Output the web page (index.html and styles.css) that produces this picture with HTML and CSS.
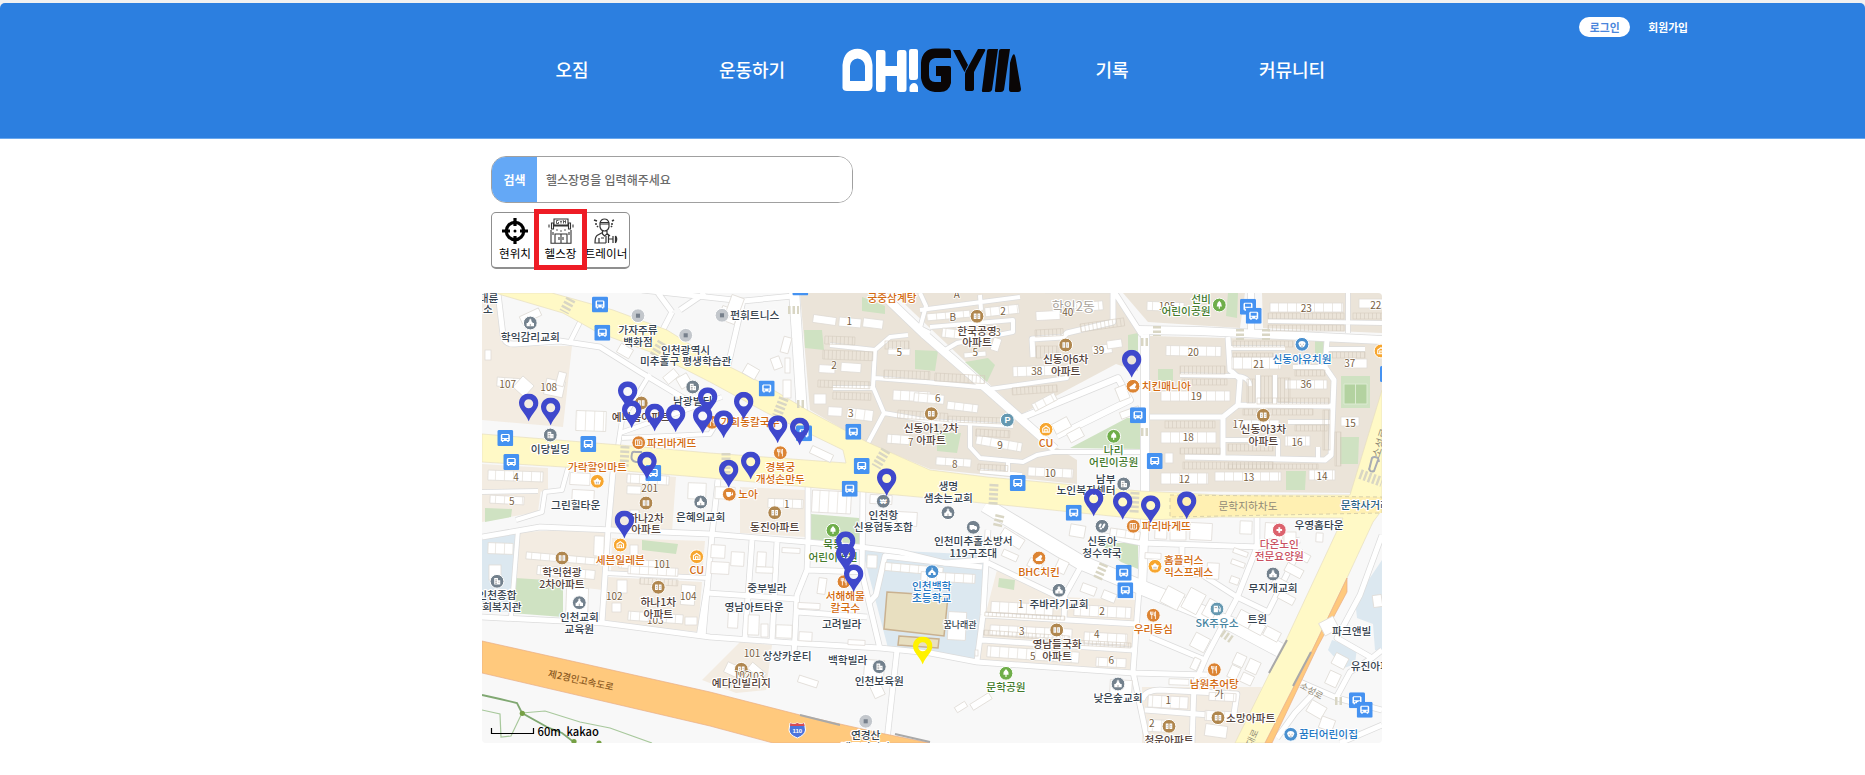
FILE: index.html
```html
<!DOCTYPE html>
<html lang="ko">
<head>
<meta charset="utf-8">
<title>OH!GYM</title>
<link rel="stylesheet" href="styles.css">
</head>
<body>
<header class="header">
  <div class="account">
    <a class="login">로그인</a>
    <a class="join">회원가입</a>
  </div>
  <nav class="nav">
    <a>오짐</a>
    <a>운동하기</a>
    <a class="logo">
      <svg viewBox="842 48 180 45" width="180" height="45" role="img" aria-label="OH!GYM">
        <path fill="#fff" fill-rule="evenodd" d="M842.500 88V65Q844 49 857.500 48.700Q871 49 872.500 65V86Q872 91 867 91H847Q843 91 842.500 88ZM850 81H865V66Q864 59 857.500 58.500Q851 59 850 66Z"/>
        <path fill="#fff" d="M878 50H883Q885.500 50 885.500 53V66H897V53Q897 50 900 50H904Q906.500 50 906.500 53V89Q906.500 92 904 92H900Q897 92 897 89V76H885.500V89Q885.500 92 883 92H879Q876 92 876 89V53Q876 50 878 50Z"/>
        <path fill="#fff" d="M911 49H916Q918 49 918 51V77Q918 80 915 80H911Q909 80 909 77V51Q909 49 911 49ZM909.500 91V87Q911 83 914 83Q917 83 918 87V92H911Q909.500 92 909.500 91Z"/>
        <path fill="#0a0606" d="M949 48.500Q951 49 951 51V58H935Q929 59 929 66V75Q929 82 935 82H941V76H936V66H949Q951 66 951 68V83Q949 92 940 92H935Q923 91 921 78V63Q922 49 935 48.500Z"/>
        <path fill="#0a0606" d="M953 50H960L968 65L964.500 72ZM978 49H984Q986 49 985 51L974 72V89Q974 91 971 91H967Q965 91 965 89V74Q965 71 967 69Z"/>
        <path fill="#0a0606" d="M989 49H998L992 90Q991 92 989 92H983Q981.500 92 982 90L987 51Q987 49 989 49ZM1001 49H1010L1004 90Q1003 92 1001 92H996Q994.500 92 995 90L999 51Q999 49 1001 49ZM1010 63Q1014 47 1016 60L1021 89Q1021 92 1018 92H1011Q1009 92 1009 89Z"/>
      </svg>
    </a>
    <a>기록</a>
    <a>커뮤니티</a>
  </nav>
</header>

<main class="main">
  <form class="search">
    <button type="button" class="search-button">검색</button>
    <input class="search-input" type="text" placeholder="헬스장명을 입력해주세요">
  </form>

  <ul class="modes">
    <li class="mode">
      <svg viewBox="0 0 26 26" width="26" height="26" fill="none" stroke="#000" stroke-width="3.200">
        <circle cx="13" cy="13" r="8.700"/><path d="M13 0V8M13 18V26M0 13H8M18 13H26"/><circle cx="13" cy="13" r="1.500" fill="#000" stroke="none"/>
      </svg>
      <span>현위치</span>
    </li>
    <li class="mode mode-selected">
      <svg viewBox="0 0 26 26" width="26" height="26" fill="none" stroke="#333" stroke-width="1.100">
        <path d="M6 1H20V7H6ZM3.500 5V11H5.500V5ZM20.500 5V11H22.500V5ZM1 6.500V9.500M25 6.500V9.500M5.500 8H20.500M3 12V25.300H23V12M7 25V16H19V25M13 16V25M11 19V22M15 19V22M5 14V17M21 14V17"/>
        <path d="M8 12H10M12 13H14M16 12H18" stroke-width=".8"/>
        <path d="M10.500 2.500H8.500V5.500H10.500V4M12 2.500L13 4L14 2.500M13 4V5.500M15.500 5.500V2.500L16.500 4L17.500 2.500V5.500" stroke-width=".8"/>
      </svg>
      <span>헬스장</span>
    </li>
    <li class="mode">
      <svg viewBox="0 0 26 26" width="26" height="26" fill="none" stroke="#333" stroke-width="1.200">
        <path d="M7 5Q8 1 11.500 1Q15 1 16 5V9Q15 13 11.500 13Q8 13 7 9ZM7 6H16M7 4.500H16M9.500 13V16L11.500 18L14 16V13M9.500 14.500L4 17.500Q2 19 2 25H13M6 20V25M14 15.500L17 18M8 20H11"/>
        <path d="M1 2L4 3M2 6L4 6M19 3L21 2M18 6H20M4 9L5 8M18 8L19 9" stroke-width="1.700"/>
        <path d="M13 18V25M15.500 17V25M15.500 21H20M20 18V25M22.500 18V25M22.500 18Q25 21 22.500 25"/>
      </svg>
      <span>트레이너</span>
    </li>
  </ul>

  <section class="map">
    <svg id="map" viewBox="482 293 900 450" width="900" height="450">
      <defs>
        <pattern id="parking" width="4" height="20" patternUnits="userSpaceOnUse"><path class="slot" d="M0 0V20"/></pattern>
        <pattern id="units" width="9" height="30" patternUnits="userSpaceOnUse"><path class="unit-line" d="M0 0V30"/></pattern>
        <symbol id="pin" viewBox="0 0 20 28"><path fill-rule="evenodd" d="M10 0C4.500 0 .3 4.300 .3 9.600C.3 16 7 20 10 28C13 20 19.700 16 19.700 9.600C19.700 4.300 15.500 0 10 0ZM10 5.800A4.500 4.500 0 1 1 10 14.800A4.500 4.500 0 1 1 10 5.800Z"/></symbol>
        <symbol id="bus" viewBox="0 0 16 16"><rect width="16" height="16" rx="1.500" fill="#4592f1"/><path fill="#fff" fill-rule="evenodd" d="M4.500 4H11.500L12.500 5V11H11.500V12H10V11H6V12H4.500V11H3.500V5ZM5 5V8H11V5ZM5 9V10H6.500V9ZM9.500 9V10H11V9Z"/></symbol>
        <symbol id="i-church" viewBox="-7 -7 14 14"><path fill="#fff" d="M-.5 -4.500H.5V-3.500H1.500V-2.700H.5L2.500 -.5V0H4V3.500H-4V0H-2.500V-.5L-.5 -2.700H-1.500V-3.500H-.5Z"/><path class="ink" d="M0 3.500V1"/></symbol>
        <symbol id="i-apt" viewBox="-7 -7 14 14"><path fill="#fff" d="M-3.500 -3H-.5V3H-3.500ZM.5 -3H3.500V3H.5Z"/><path class="ink" d="M-2.500 -1H-1.500M-2.500 1H-1.500M1.500 -1H2.500M1.500 1H2.500"/></symbol>
        <symbol id="i-building" viewBox="-7 -7 14 14"><path fill="#fff" d="M-3 -3.500H1V-1H3.500V3.500H-3Z"/><path class="ink" d="M-2 -1.500H0M-2 .5H0M-2 2.200H0M1.500 1H2.500"/></symbol>
        <symbol id="i-food" viewBox="-7 -7 14 14"><path fill="none" stroke="#fff" stroke-width=".9" d="M-3 -4V-1H-.4V-4M-1.700 -4V4M2.300 4V-4Q.8 -3 1 .5H2.300"/></symbol>
        <symbol id="i-bread" viewBox="-7 -7 14 14"><path fill="none" stroke="#fff" d="M-3.500 -3H2.500Q4 -3 3.500 0V3H-3.500ZM-1 -3V3M1 -2V2"/></symbol>
        <symbol id="i-chicken" viewBox="-7 -7 14 14"><path fill="#fff" d="M-4 1L-1 -1L2 -3.500L3.500 -2L2 1.500H4L3 3.300H-3Z"/></symbol>
        <symbol id="i-cafe" viewBox="-7 -7 14 14"><path fill="#fff" d="M-3.500 -2.500H2V0H3V-2H4V1H2Q1 3 -1 3Q-3.500 3 -3.500 -2.500Z"/></symbol>
        <symbol id="i-store" viewBox="-7 -7 14 14"><path fill="none" stroke="#fff" stroke-width="1.200" d="M-3.500 -1L0 -3.500L3.500 -1V3H-3.500ZM-1.300 3V0H1.300V3"/></symbol>
        <symbol id="i-basket" viewBox="-7 -7 14 14"><path fill="#fff" d="M-4 -1H-2.500L0 -3.500L2.500 -1H4V.3H3.400L2.700 3.500H-2.700L-3.400 .3H-4Z"/><path class="ink" d="M-1 .5V2.500M1 .5V2.500"/></symbol>
        <symbol id="i-tree" viewBox="-7 -7 14 14"><path fill="#fff" d="M0 -4.500Q3 -2 2.800 1.500H.6V4H-.6V1.500H-2.800Q-3 -2 0 -4.500Z"/></symbol>
        <symbol id="i-face" viewBox="-7 -7 14 14"><path fill="#fff" d="M-4 -1Q-3 -3.500 0 -3.500Q3 -3.500 4 -1Q3 3.500 0 3.500Q-3 3.500 -4 -1Z"/><path class="ink" d="M-2 0H-1M1 0H2M-1 2H1"/></symbol>
        <symbol id="i-school" viewBox="-7 -7 14 14"><path fill="#fff" d="M0 -4.500L1 -3L.3 -2.500L4 1V3.500H1.200V1.500H-1.200V3.500H-4V1L-.3 -2.500V-4.500Z"/></symbol>
        <symbol id="i-cross" viewBox="-7 -7 14 14"><path stroke="#fff" stroke-width="2" d="M0 -3V3M-3 0H3"/></symbol>
        <symbol id="i-fuel" viewBox="-7 -7 14 14"><path fill="#fff" d="M-3.500 -3.500H1V3.500H-3.500Z"/><path class="ink" d="M-2.500 -1.500H0"/><path fill="none" stroke="#fff" d="M1 0H2.500V2.500H3.500V-1.500L2 -3"/></symbol>
        <symbol id="i-truck" viewBox="-7 -7 14 14"><path fill="#fff" d="M-4 -2.500H1V-1.500H3L4 0V2H-4Z"/><circle cx="-2" cy="2" r="1" fill="#fff"/><circle cx="2.500" cy="2" r="1" fill="#fff"/></symbol>
        <symbol id="i-pill" viewBox="-7 -7 14 14"><path stroke="#fff" stroke-width="2.200" stroke-linecap="round" d="M-2.500 0L-1.500 -2M1 1L2.500 -2M-1.500 2.300H-1"/></symbol>
        <symbol id="i-dot" viewBox="-7 -7 14 14"><rect x="-2.200" y="-2.200" width="4.400" height="4.400" fill="#77808c"/></symbol>
      </defs>
      <rect class="land" x="482" y="293" width="900" height="450"/>
      <g id="areas"></g>
      <g id="casing"></g>
      <g id="streets"></g>
      <g id="avenues"></g>
      <g id="details"></g>
      <g id="labels"></g>
      <g id="pins"></g>
      <g class="scale">
        <path d="M491.500 728V733.500H533.500V728"/>
        <text x="537.500" y="735.500">60m</text>
        <text x="566.500" y="735.500">kakao</text>
      </g>
    </svg>
  </section>
</main>
<script src="map.js"></script>
</body>
</html>
```

FILE: styles.css
```css
* {
  box-sizing: border-box;
}

body {
  margin: 0;
  padding-top: 3px;
  height: 775px;
  overflow: hidden;
  background: linear-gradient(#f1f1f1 8px, #fff 8px);
  font-family: "Noto Sans CJK KR", sans-serif;
}

.header {
  height: 136px;
  border-bottom: 1px solid #6aa8ee;
  border-radius: 5px 5px 0 0;
  background: #2c7fe0;
  color: #fff;
}

.account {
  display: flex;
  align-items: center;
  justify-content: flex-end;
  gap: 18px;
  height: 34px;
  padding: 14px 177px 0 0;
  font-size: 10.800px;
  font-weight: 700;
  line-height: 20px;
}

.login {
  width: 51px;
  height: 20px;
  border-radius: 10px;
  background: #fff;
  color: #4a86dc;
  text-align: center;
}

.join {
  height: 20px;
}

.nav {
  display: grid;
  grid-template-columns: repeat(5, 180px);
  width: 900px;
  height: 66px;
  margin-left: calc(50vw - 450.500px);
  align-items: center;
  text-align: center;
  font-size: 18px;
  line-height: 26px;
  font-weight: 500;
}

.nav a {
  padding-bottom: 2px;
}

.nav .logo,
.logo svg {
  display: block;
  padding: 0;
}

.main {
  width: 900px;
  margin: 17px 0 0 calc(50vw - 450.500px);
}

.search {
  display: flex;
  width: 362px;
  height: 47px;
  margin: 0 0 9px 9px;
  border: 1px solid #a0a0a0;
  border-radius: 15px;
  overflow: hidden;
}

.search-button {
  width: 45px;
  padding: 0;
  border: 0;
  background: #64a8f6;
  color: #fff;
  font: 700 12px "Noto Sans CJK KR", sans-serif;
}

.search-input {
  flex: 1;
  padding: 0 9px;
  border: 0;
  font: 500 12px "Noto Sans CJK KR", sans-serif;
}

.search-input::placeholder {
  color: #6a6a6a;
}

.modes {
  display: flex;
  width: 139px;
  height: 57px;
  margin: 0 0 24px 9px;
  padding: 0;
  border: 1px solid #8f8f8f;
  border-bottom-width: 2px;
  border-radius: 5px;
  list-style: none;
}

.mode {
  display: flex;
  flex-direction: column;
  align-items: center;
  width: 46px;
  padding-top: 5px;
  font-size: 11.600px;
  font-weight: 400;
  line-height: 19px;
  white-space: nowrap;
}

.mode svg {
  flex: none;
}

.mode-selected {
  width: 53px;
  height: 61px;
  margin: -4px -4px 0 -4px;
  padding-top: 4px;
  border: 5px solid #ee1c25;
  background: #fff;
  z-index: 1;
}

.map {
  width: 900px;
  height: 450px;
  border-radius: 4px;
  overflow: hidden;
}

.map svg {
  display: block;
}

.land { fill: #f8f8f8; }
.light { fill: #f3ece2; }
.beige { fill: #ebe4d9; }
.green { fill: #cfe2c2; }
.water { fill: #dce8f0; }
.block { fill: #f8f8f8; }
.field { fill: #e8dfc0; stroke: #c9b190; stroke-width: 1.500; }
.yellow { fill: #fff9c6; stroke: #e6dec0; stroke-width: .7; }
.tunnel { fill: #fff0b2; stroke: #cfc6a5; stroke-width: .8; stroke-dasharray: 4 3; }
.highway { fill: #ffc97d; stroke: #e8ad86; stroke-width: .7; }
.wall { stroke: #a9a9a9; stroke-width: 2; fill: none; }
.trail { fill: none; stroke: #80a872; stroke-width: 1.800; }
.path { fill: none; stroke: #a8c89c; stroke-width: 1.200; }
.node { fill: #76a044; }

#casing path { fill: none; stroke: #dcdcdc; stroke-linejoin: round; }
#streets path { fill: none; stroke: #fff; stroke-linejoin: round; }

.building { fill: #fff; stroke: #e0dcd6; stroke-width: .8; }
.slot { stroke: #cdc4b7; stroke-width: .9; }
.unit-line { stroke: #dfdad2; stroke-width: 1.200; }
.parking { fill: url(#parking); stroke: #d6cdc0; stroke-width: .6; }
.units { fill: url(#units); }
.crossing { stroke: #d9d6c4; stroke-dasharray: 2.500 2; fill: none; }
.ink { stroke: #8a8a8a; stroke-width: .8; fill: none; }
.court { fill: #b3d2a0; stroke: #dcebd2; }

.label {
  font-size: 10.700px;
  font-weight: 500;
  text-anchor: middle;
  fill: #35424e;
  stroke: #fff;
  stroke-width: 2.200px;
  stroke-linejoin: round;
  paint-order: stroke;
}

.label.start { text-anchor: start; }
.label.num { fill: #77603f; font-size: 10px; font-weight: 400; stroke-width: 1.500px; }
.label.apt { fill: #54423a; }
.label.orange { fill: #d36a10; }
.label.leaf { fill: #437a2b; }
.label.blue { fill: #2377c4; }
.label.teal { fill: #45839f; }
.label.red { fill: #c9505f; }
.label.navy { fill: #285f83; }
.label.soft { fill: #918b78; font-weight: 400; stroke: none; }
.label.small { font-size: 9px; }
.label.area { fill: #aaa39b; font-size: 13px; font-weight: 400; }
.label.road { fill: #8b591d; stroke: none; font-size: 9.500px; }

.poi { stroke: #fff; stroke-width: 1; }
.pin { fill: #3f48cc; }
.pin-center { fill: #fff200; }
.shield { fill: #4c74dc; stroke: #fff; }
.shield-top { fill: #d84b55; }
.shield-text { fill: #fff; font: 700 6px "Liberation Sans", sans-serif; text-anchor: middle; }
.shield-text.won { font-size: 7px; }
.shield-text.park { font-size: 9px; }

.scale path { fill: none; stroke: #000; stroke-width: 1.200; }
.scale text { font-size: 11.200px; font-weight: 500; }
```

FILE: map.js
```js
const NS = "http://www.w3.org/2000/svg";

function add(parent, tag, attrs, text) {
  const el = document.createElementNS(NS, tag);
  for (const key in attrs) el.setAttribute(key, attrs[key]);
  if (text) el.textContent = text;
  (typeof parent === "string" ? document.getElementById(parent) : parent).appendChild(el);
  return el;
}

// Land use: [class, polygon points]
[
  ["light", "482,293 499,293 507,346 572,346 563,427 482,420"],
  ["light", "482,464 548,468 548,492 482,488"],
  ["light", "482,485 541,489 538,512 482,522"],
  ["light", "615,472 676,477 672,532 610,529"],
  ["light", "520,532 610,528 603,590 515,580"],
  ["light", "612,538 705,541 702,577 611,572"],
  ["light", "607,577 702,582 698,632 604,622"],
  ["light", "740,487 806,490 806,537 740,533"],
  ["light", "702,680 740,642 772,645 766,690 736,693"],
  ["beige", "800,293 884,293 1045,440 1077,460 1077,484 930,469 865,442 810,410"],
  ["beige", "893,293 1113,293 1138,330 1138,415 1022,415"],
  ["block", "1022,414 1116,364 1140,372 1140,450 1055,448"],
  ["beige", "1123,293 1245,293 1240,328 1148,322"],
  ["beige", "1262,293 1382,293 1382,333 1263,328"],
  ["beige", "1150,336 1382,342 1382,397 1351,493 1150,491"],
  ["light", "997,570 1060,597 1135,600 1135,624 985,616"],
  ["light", "984,617 1134,627 1132,648 982,639"],
  ["light", "982,642 1132,652 1132,671 979,660"],
  ["light", "1142,687 1262,687 1240,743 1142,743"],
  ["water", "862,549 985,555 976,661 888,648"],
  ["water", "482,537 518,533 511,612 482,611"],
  ["water", "1382,560 1355,600 1357,618 1373,624 1375,650 1382,652"],
  ["water", "1332,640 1357,648 1355,664 1344,668 1328,650"],
  ["green", "804,330 822,330 824,350 805,348"],
  ["green", "862,297 885,306 885,314 862,311"],
  ["green", "915,350 938,351 935,371 915,369"],
  ["green", "965,362 988,358 995,365 987,382"],
  ["green", "937,433 961,433 957,453 937,451"],
  ["green", "1070,448 1127,418 1140,418 1140,449"],
  ["green", "1128,335 1138,333 1138,354 1128,350"],
  ["green", "1228,293 1238,293 1237,318 1226,316"],
  ["green", "1315,340 1324,340 1323,356 1315,356"],
  ["green", "1158,369 1173,369 1173,383 1158,380"],
  ["green", "1341,376 1370,376 1370,408 1341,408"],
  ["green", "1340,437 1359,437 1358,464 1340,464"],
  ["green", "1286,471 1306,471 1305,490 1286,490"],
  ["green", "1100,543 1138,543 1138,569 1121,562"],
  ["green", "999,578 1015,580 1014,590 998,587"],
  ["green", "642,540 678,544 676,554 642,550"],
  ["green", "485,508 512,509 511,517 485,522"],
  ["green", "515,578 563,581 563,617 511,613"],
  ["green", "811,514 859,518 860,545 809,540"],
  ["field", "887,592 948,596 944,636 884,629"],
  ["field", "899,636 939,639 938,648 898,645"]
].forEach(([c, points]) => add("areas", "polygon", { class: c, points }));

// Streets: [width, path data]
[
  [5, "M498 293L503 335Q505 345 515 344L560 341L600 347L640 372L690 402"],
  [4, "M582 318L570 342"],
  [4, "M650 374L622 420L618 446"],
  [4, "M722 397L620 433M622 438L710 434L716 424"],
  [10, "M794 290L802 412"],
  [5, "M642 290L743 301L793 296M743 301L727 370M672 312L655 345M672 312L658 293M680 310L705 293"],
  [5, "M718 480L712 535L703 637"],
  [5, "M613 472L608 530L602 622"],
  [5, "M482 537L540 527L710 534L807 542L860 547L900 552L945 563L985 560"],
  [5, "M482 617L603 623L710 637L793 643L880 648L930 653L977 662L1133 673L1207 675"],
  [4, "M518 530L511 617"],
  [4, "M605 573L708 578L699 634M568 468L562 490L545 492L542 512L516 520M482 492L538 491"],
  [5, "M777 542L772 641M752 540L745 638M707 593L797 599"],
  [5, "M808 487L808 542L807 570L797 595L794 655M807 570L863 572M797 612L867 617"],
  [5, "M863 492L862 573L880 649M982 567L945 563L885 556L876 595L868 604"],
  [5, "M897 650L887 740"],
  [14, "M985 505L1080 562L1150 591L1233 625L1280 650"],
  [5, "M988 530L983 615L977 661M988 563L1063 599M1080 568L1065 595L1064 620M983 615L1137 624M982 640L1133 650"],
  [5, "M1139 590L1133 672L1148 743"],
  [8, "M1145 515L1142 590"],
  [5, "M1100 535L1142 543L1260 547L1300 540M1257 518L1257 547L1237 598L1207 655L1194 685L1192 743"],
  [5, "M1182 547L1182 562L1237 597L1268 612L1300 548M1150 637L1205 660M1145 710L1235 717M1142 700Q1145 690 1160 690L1237 694L1233 720"],
  [5, "M1382 535L1360 595L1337 638L1372 658L1350 672L1336 698M1372 658L1382 650M1300 682L1337 698L1382 710M1315 692L1295 713L1277 738M1340 743L1382 725"],
  [8, "M878 290L925 335L988 390L1055 449"],
  [5, "M1045 290L1113 290L1113 322L1067 333L1063 337L1032 339L1033 357M1113 290L1142 335"],
  [4, "M830 345L875 350L890 337L908 335M875 350L873 387L884 413L930 421L1013 426M833 388L873 388M875 378L925 382L990 388M884 413L868 443"],
  [4, "M970 425L970 447L980 458L1023 462L1037 455L1053 452L1140 452M980 471L1022 475M1008 462L1008 474"],
  [4, "M990 389L1067 378V370M945 350L957 343L1013 332L1013 320L930 327M920 310L1020 297M980 295L981 310M920 293L926 306L920 328L930 333"],
  [6, "M1023 417L1118 378L1130 400L1057 436"],
  [8, "M1138 330L1200 331L1382 340M1145 330L1145 515"],
  [6, "M1251 293L1251 333"],
  [4, "M1268 321L1382 323M1348 293V333"],
  [5, "M1228 337L1230 370L1240 379L1238 405L1223 417L1150 417M1238 405L1333 406M1327 340L1325 367L1334 380L1331 455L1325 460L1185 457M1223 417V457"],
  [4, "M1180 375L1235 376Q1249 376 1250 386M1230 348H1285M1258 375V405M1275 375V405M1288 422H1333M1223 440H1278V457M1318 447V458M1293 367H1327M1327 349H1365"]
].forEach(([w, d]) => {
  add("casing", "path", { d, "stroke-width": w + 1.5 });
  add("streets", "path", { d, "stroke-width": w });
});

// Main roads
[
  ["yellow", "495,293 552,293 613,310 667,330 710,357 760,382 807,410 867,442 930,470 987,477 1140,491 1220,495 1350,495 1382,390 1382,510 1373,522 1347,578 1310,655 1265,743 1235,743 1287,638 1343,518 1220,517 1150,520 1003,505 930,498 807,487 710,478 613,470 482,462 482,434 620,445 710,453 846,463 843,450 767,413 710,382 653,353 597,332 563,313"],
  ["tunnel", "1170,495 1382,497 1382,513 1170,517"],
  ["highway", "1347,578 1347,592 1317,648 1272,743 1265,743 1310,655"],
  ["highway", "482,641 710,692 800,715 880,733 930,743 773,743 710,726 482,673"]
].forEach(([c, points]) => add("avenues", "polygon", { class: c, points }));

// Buildings: [x, y, width, height, rotation]
[
  [497,378,27,9,4],[545,380,19,16,12],[557,372,8,14,15],[516,379,15,15,42],[485,350,6,10,0],
  [576,411,30,20,2],[520,312,21,8,-25],[618,346,14,10,30],[664,372,14,9,-40],[678,375,12,12,-30],
  [720,308,17,14,20],[728,296,13,22,20],[782,337,8,16,15],[772,357,9,12,-20],[744,366,14,11,30],[783,380,8,18,0],[785,358,5,15,0],
  [488,471,55,10,2],[490,496,34,8,3],[627,475,42,9,3],[627,486,14,8,2],[630,510,9,12,0],[570,473,20,12,3],[572,490,22,14,3],[688,483,18,16,2],[715,487,20,12,2],
  [812,491,39,22,3],[870,495,22,9,3],[897,512,20,14,3],[768,499,35,9,2],[810,450,23,8,25],
  [526,555,72,7,5],[537,568,58,9,5],[566,588,22,35,2],[488,543,25,11,2],[489,565,12,15,0],[594,536,10,20,2],
  [619,560,43,9,3],[628,567,50,8,3],[612,603,9,9,0],[628,613,55,9,4],[617,580,10,13,0],[681,585,14,20,4],[685,617,12,8,0],[630,545,8,10,0],
  [711,545,14,13,3],[711,562,18,12,3],[731,552,13,14,3],[757,552,9,15,3],[756,567,17,6,2],[782,548,18,5,3],[728,612,10,16,3],[748,615,11,20,2],[761,624,7,13,0],[776,625,16,13,2],
  [818,578,8,16,8],[798,603,22,6,3],[799,632,13,9,3],[848,640,17,5,3],[867,555,10,13,2],
  [725,665,18,11,25],[748,667,18,8,40],[798,678,20,7,18],[864,660,20,22,4],[872,684,11,13,-25],
  [885,565,58,8,5],[921,573,54,9,3],[948,612,18,28,3],[1000,533,24,11,32],[1002,552,16,7,24],[1028,560,14,9,27],[1056,560,11,13,25],
  [975,650,3,6,0],[991,603,62,11,3],[1074,606,57,11,3],[990,627,82,10,3],[1084,633,43,11,3],[987,649,92,11,4],[1096,658,30,9,3],[1070,525,15,12,10],[1110,530,30,8,8],[1081,585,15,9,20],[1102,592,14,9,22],[1110,680,22,15,3],
  [970,698,22,7,-32],[955,704,12,6,-32],
  [1155,523,12,16,3],[1170,526,16,14,0],[1190,523,22,17,3],[1240,521,12,13,2],[1265,523,18,16,3],[1284,532,12,13,0],[1316,533,7,9,3],
  [1145,553,16,6,3],[1190,562,12,15,3],[1207,563,12,16,3],[1233,550,15,5,20],[1231,561,14,5,20],[1230,577,9,7,20],
  [1163,589,19,18,28],[1185,590,17,22,28],[1205,600,12,18,28],[1237,612,15,14,28],[1250,622,14,11,28],[1264,629,16,10,28],[1272,580,20,9,28],[1285,566,18,9,28],[1295,552,15,8,28],[1278,594,17,8,28],
  [1192,635,16,15,28],[1192,658,7,12,25],[1234,654,11,12,25],[1247,660,12,13,25],[1229,666,10,13,25],[1241,674,12,10,25],[1169,679,20,6,2],
  [1321,619,16,14,-28],[1333,655,14,12,28],[1327,672,12,14,25],[1308,703,17,13,30],[1320,718,14,12,20],[1373,595,9,12,-8],
  [1148,696,40,12,3],[1209,693,27,8,3],[1205,711,26,10,3],[1148,720,25,12,3],[1205,725,22,12,8],
  [839,318,22,9,5],[813,316,23,8,8],[863,319,20,9,7],[888,348,22,7,2],[819,365,16,8,3],[841,363,20,9,4],[828,407,14,9,3],[847,409,26,11,7],[814,394,12,10,0],
  [893,391,37,10,3],[914,394,30,9,5],[947,403,31,8,7],[887,435,25,9,4],[936,458,35,8,4],[976,439,46,9,10],[1028,468,45,9,3],
  [927,312,43,7,-5],[985,306,34,9,-6],[942,330,37,9,6],[964,352,22,5,-5],[1013,366,42,10,-2],[1092,345,20,9,-8],[1107,340,15,8,-8],[1036,311,24,9,-3],[1074,302,29,9,-5],[992,338,8,13,18],
  [1053,420,17,11,-28],[1068,430,15,10,-28],[1117,386,11,14,-22],[1032,398,25,8,-28],[1120,409,20,7,-20],
  [1147,302,37,9,2],[1270,303,73,9,0],[1359,299,24,9,0],[1166,346,55,10,1],[1232,357,49,12,0],[1285,380,42,9,0],[1345,359,22,9,0],
  [1161,391,69,10,0],[1234,420,45,8,0],[1161,432,55,11,0],[1285,436,25,10,0],[1341,417,18,9,0],[1161,473,47,11,0],[1215,472,66,9,0],[1309,470,26,10,0],[1165,453,8,10,0]
].forEach(([x, y, w, h, r]) => {
  const g = add("details", "g", { transform: `rotate(${r} ${x + w / 2} ${y + h / 2})` });
  add(g, "rect", { class: "building", x, y, width: w, height: h });
  if (w > 24) add(g, "rect", { class: "units", x: x + 1, y, width: w - 2, height: h });
});

// Parking strips
[
  [825,336,30,8,2],[823,350,50,9,2],[818,380,52,7,2],[833,392,38,7,2],[884,370,46,8,2],[885,341,24,8,0],[898,410,50,8,4],
  [1012,388,45,7,-4],[948,416,66,6,2],[976,429,34,7,3],[978,464,30,6,3],[935,373,50,8,3],[1035,330,28,7,-3],[1036,346,22,12,0],[1080,324,44,8,-8],[1070,302,20,7,-4],
  [1268,313,76,6,0],[1353,313,29,6,0],[1268,325,76,6,0],[1180,366,45,8,0],[1182,379,45,6,0],[1233,341,60,6,0],[1233,353,40,4,0],[1330,352,35,6,0],
  [1247,379,8,24,0],[1261,376,11,27,0],[1278,378,12,24,0],[1257,398,72,6,0],[1243,409,70,6,0],[1295,370,30,6,0],
  [1165,421,50,7,0],[1180,448,40,6,0],[1183,462,90,7,0],[1228,444,45,7,0],[1228,464,90,5,0],[1323,410,7,40,0],[1335,432,6,34,0],[1295,425,32,6,0],
  [984,630,86,5,4],[985,612,80,4,3],[1073,640,58,5,3],[640,578,38,6,3]
].forEach(([x, y, width, height, r]) =>
  add("details", "rect", { class: "parking", x, y, width, height, transform: `rotate(${r} ${x} ${y})` }));

// Pedestrian crossings
[
  [10,"M571 299L564 312"],[9,"M662 342L653 357"],[10,"M784 398L777 416"],[10,"M886 450L876 467"],[9,"M625 446L624 468"],[9,"M726 453L726 474"],
  [9,"M994 484L993 505"],[9,"M1135 492L1134 513"],[9,"M1000 515L997 528"],[9,"M1104 564L1097 580"],[8,"M1222 633L1232 640"],[10,"M1360 474L1382 482"],
  [8,"M1240 329V340"],[8,"M1266 329V340"],[8,"M1157 326V336"],[8,"M1141 342H1150"],[8,"M1141 432H1150"],[8,"M797 404H806"],[8,"M1335 701H1342"],[8,"M788 310H799"]
].forEach(([w, d]) => add("details", "path", { class: "crossing", "stroke-width": w, d }));

add("details", "path", { class: "trail", d: "M482 695L500 699L517 703L522 713L547 727L562 733L575 743" });
add("details", "path", { class: "path", d: "M482 710L500 714L501 737L511 736L522 713L545 711L580 722L610 728L652 743" });
[[522.300, 713.300], [574, 741.500], [599, 743]].forEach(([cx, cy]) => add("details", "circle", { class: "node", cx, cy, r: 2.600 }));
add("details", "path", { class: "wall", d: "M800 715L840 725M895 734L930 742M1287 640L1269 673M1311 652L1293 686" });
add("details", "path", { class: "court", d: "M1344 384H1367V404H1344ZM1355.500 384V404" });
add("details", "path", { d: "M1369 470L1372 458Q1374 456 1378 458L1379 462M1369 468Q1370 473 1374 471L1378 460M632 454Q632 451 636 452H642M632 454Q630 461 636 462H640", fill: "none", stroke: "#a9acb4", "stroke-width": 2 });

const COLORS = { g: "#73818d", b: "#b0874f", o: "#dc8433", y: "#f7a62f", l: "#6fae4a", u: "#4a90cf", t: "#6598b0", r: "#dc626d", d: "#c3c7cc" };

// Places: [icon, colour, x, y]
[
  ["church","g",530.3,323],["dot","d",638,315.7],["dot","d",685.7,335.3],["dot","d",722,315.3],["building","g",692.7,387],["apt","b",641.3,403],
  ["food","o",712,422.3],["building","g",550.3,435],["bread","o",638.7,442.7],["basket","y",597.3,481.3],["apt","b",646,503],["church","g",700.7,502],
  ["apt","b",931.3,413.7],["food","o",780.3,452.7],["cafe","o",729.3,494.3],["apt","b",774.7,512.7],["","g",883.3,501.3],["apt","b",977,316.3],
  ["apt","b",1065.7,345],["","t",1007.3,420],["store","y",1046,429.3],["tree","l",1113.7,436.3],["church","g",948,512.7],["building","g",1123.7,484],
  ["chicken","o",1133,386.3],["tree","l",1219.3,305],["face","u",1302,344.3],["apt","b",1263.3,415.3],["store","y",1381,351],["store","y",620.3,545],
  ["store","y",696.7,556.7],["apt","b",658.3,587.3],["apt","b",562,558],["building","g",497,581.3],["church","g",579.3,602.7],["food","o",844,581.7],
  ["tree","l",833,530.3],["apt","b",741.3,669.3],["building","g",879.3,666.7],["dot","d",865.7,721.3],["school","u",932,571.7],["truck","g",973.3,527.3],
  ["chicken","o",1039,558],["pill","g",1102,526.3],["church","g",1059,590.3],["apt","b",1056.7,630],["tree","l",1006,673.3],["church","g",1118,684],
  ["bread","o",1133.3,526.3],["basket","y",1155,566.3],["cross","r",1279.3,530],["church","g",1273,574],["fuel","t",1217,609],["food","o",1153.3,615.3],
  ["food","o",1214.3,669.7],["apt","b",1218,717.7],["apt","b",1169,726.3],["face","u",1290.7,734.3]
].forEach(([icon, c, x, y]) => {
  add("labels", "circle", { class: "poi", cx: x, cy: y, r: 6.900, fill: COLORS[c] });
  if (icon) add("labels", "use", { href: "#i-" + icon, x: x - 6.5, y: y - 6.5, width: 13, height: 13 });
});
add("labels", "text", { class: "shield-text won", x: 883.300, y: 503.800 }, "₩");
add("labels", "text", { class: "shield-text park", x: 1007.400, y: 423.200 }, "P");

// Text: [content, x, vertical centre, classes, rotation]
[
  ["대륜",488.5,297.5],["소",488,309],["학익감리교회",530.3,337.3],["가자주류",638,330.3],["백화점",638,342.3],["인천광역시",685.5,350],["미추홀구 평생학습관",685.7,361.3],
  ["펀휘트니스",754.8,315.3],["107",507.7,383.7,"num"],["108",548.7,386.7,"num"],["남광빌딩",692.7,401.3],["예다솜아파트",641.3,416.7,"apt"],["가회동칼국수",750,422.3,"orange"],
  ["이당빌딩",550.3,449],["파리바게뜨",671.7,442.7,"orange"],["가락할인마트",597.3,467,"orange"],["그린힐타운",575.7,505.3],["201",649.7,487.7,"num"],["4",516,476.7,"num"],["5",511.7,501,"num"],
  ["하나2차",646,517.5,"apt"],["아파트",646,529,"apt"],["은혜의교회",700.7,517],["궁중삼계탕",892,298.3,"orange"],["1",849.3,321.3,"num"],["5",899.3,352.3,"num"],["2",834,365.3,"num"],["3",850.7,412.7,"num"],["7",910.7,441.7,"num"],
  ["신동아1,2차",931,428,"apt"],["아파트",931,440,"apt"],["경복궁",780.3,466.7,"orange"],["개성손만두",780.3,478.7,"orange"],["노아",748,494.3,"orange"],["동진아파트",774.7,527,"apt"],["1",786.7,504,"num"],
  ["인천항",883.3,515],["신용협동조합",883.3,527.3],["A",956.7,294,"num"],["B",952.7,316.7,"num"],["2",1003,311.3,"num"],["3",998,332,"num"],["5",975.3,352.3,"num"],["6",937.7,398,"num"],["한국공영",977,330.7,"apt"],["아파트",977,342.3,"apt"],
  ["학익2동",1073.3,306.7,"area"],["40",1067.7,312.3,"num"],["39",1098.7,349.7,"num"],["38",1036.7,370.7,"num"],["신동아6차",1065.7,359.3,"apt"],["아파트",1065.7,371.3,"apt"],["CU",1046,443.3,"orange"],
  ["9",1000,445,"num"],["8",954.7,463.7,"num"],["10",1050.3,473.3,"num"],["나리",1113.7,450.3,"leaf"],["어린이공원",1113.7,462.3,"leaf"],["생명",948.3,485.7],["샘솟는교회",948.3,498],["남부",1105.7,478.7],["노인복지센터",1086,490.3],
  ["치킨매니아",1166.3,386,"orange"],["105",1167,306,"num"],["선비",1201,298.7,"leaf"],["어린이공원",1186,310.7,"leaf"],["20",1193.3,351.7,"num"],["21",1258.7,363.7,"num"],["23",1306.3,307.7,"num"],["22",1375.7,304.7,"num"],
  ["신동아유치원",1302,359,"blue"],["37",1349.7,363.3,"num"],["36",1306,384.3,"num"],["19",1196.3,396,"num"],["17",1238,423.7,"num"],["신동아3차",1263.3,429.3,"apt"],["아파트",1263.3,441.3,"apt"],["15",1350.3,422.7,"num"],["16",1297,442,"num"],
  ["18",1188.3,437.3,"num"],["12",1184.3,478.7,"num"],["13",1248.7,476.7,"num"],["14",1322,476.3,"num"],["문학지하차도",1248,505.7,"soft"],["문학사거리",1340.7,504.7,"navy start"],["소성로",1380,443,"soft",-72],
  ["세븐일레븐",620.3,559.7,"orange"],["CU",696.7,570.3,"orange"],["101",662,563.7,"num"],["102",614.3,595.7,"num"],["104",688.3,596,"num"],["103",655.3,620,"num"],["하나1차",658.3,601.7,"apt"],["아파트",658.3,613.7,"apt"],
  ["학익현광",562,571.7,"apt"],["2차아파트",562,583.7,"apt"],["인천종합",497,595.3],["사회복지관",497,607],["인천교회",579.3,616.7],["교육원",579.3,628.7],["제2경인고속도로",581,679.7,"road",12],
  ["중부빌라",767,587.7],["영남아트타운",754,607],["고려빌라",841.7,624],["서해해물",845.3,596,"orange"],["칼국수",845.3,607.7,"orange"],["묵동",833,543.7,"leaf"],["어린이공원",833,556.7,"leaf"],
  ["101",752,653,"num"],["상상카운티",787,656.3],["102",742,675,"num"],["103",756,675.5,"num"],["예다인빌리지",741.3,682.7,"apt"],["백학빌라",847.7,660],["인천보육원",879.3,681],["연경산",865.7,735],["배드민턴장",865.7,747],
  ["인천백학",931.7,585.5,"blue"],["초등학교",931.7,598,"blue"],["꿈나래관",960,624,"small"],["인천미추홀소방서",973.3,541.3],["119구조대",973.3,553.3],["BHC치킨",1039,572.3,"orange"],["신동아",1102,541.3],["청수약국",1102,553.3],
  ["주바라기교회",1059,604.3],["1",1020.7,604.3,"num"],["2",1102,610.7,"num"],["3",1021.7,630.7,"num"],["4",1096.7,634.3,"num"],["영남들국화",1057,644,"apt"],["아파트",1057,656,"apt"],["5",1032.7,656,"num"],["6",1111.3,660,"num"],
  ["문학공원",1006,687,"leaf"],["낮은숲교회",1118,698],["파리바게뜨",1166.3,526.3,"orange"],["홈플러스",1164,560.3,"orange start"],["익스프레스",1164,572,"orange start"],["다온노인",1279.3,544,"red"],["전문요양원",1279.3,556,"red"],
  ["우영홈타운",1319,525],["무지개교회",1273,588.3],["SK주유소",1217,623.3,"teal"],["트윈",1257.3,618.7],["우리등심",1153.3,629.3,"orange"],["파크앤빌",1351.7,631.3],["유진아파트",1350.7,666.3,"start"],["남원추어탕",1214.3,683.7,"orange"],
  ["가",1219,694,"num"],["1",1168.3,700.3,"num"],["2",1151.7,723.3,"num"],["소망아파트",1250.7,717.7,"apt"],["청운아파트",1169,740,"apt"],["소성로",1312,690,"soft small",30],["꿈터어린이집",1299,734.3,"blue start"],["대로",1251.7,737,"soft small",-65]
].forEach(([t, x, y, c = "", r]) => {
  const attrs = { class: "label " + c, x, y: y + 4 };
  if (r) attrs.transform = `rotate(${r} ${x} ${y})`;
  add("labels", "text", attrs, t);
});

// Bus stops
[
  [600,304.5],[602.3,332.7],[505.3,438],[511.3,462],[588.3,444],[653.3,473],[800.3,287.5],[766.7,388.5],[804,433.3],[853.3,431.7],[861.7,466],[849.7,488.7],
  [1138,415.3],[1017.7,483],[1073.7,512.7],[1248,306.7],[1253.7,315.7],[1154.7,461],[1388,374],[1123.7,572.7],[1125.3,590.3],[1357,700.3],[1364.7,709.7]
].forEach(([x, y]) => add("labels", "use", { href: "#bus", x: x - 8, y: y - 8, width: 16, height: 16 }));

add("labels", "path", { class: "shield", d: "M790 723Q793.500 725 797.300 723Q801 725 804.500 723L805.500 730Q805 735 797.300 738Q789.500 735 789 730Z" });
add("labels", "path", { class: "shield-top", d: "M790.500 723Q793.500 725 797.300 723Q801 725 804 723L804.500 726H790Z" });
add("labels", "text", { class: "shield-text", x: 797.300, y: 732.800 }, "110");

// Gym pins: [tip x, tip y]
[
  [528.7,421],[550.7,425],[627.7,408.7],[631.7,427.7],[654.7,431],[675.7,431.7],[707.7,414.7],[702.7,433.3],[723.7,437.7],[743.7,419.3],[777.7,442.7],[799.7,445],
  [647,479],[624.4,538],[728.7,487.3],[750.7,479],[886.7,495.7],[1131.7,377.3],[1093.7,516],[1122.7,519.3],[1150.7,522.7],[1186.7,518.7],[845.7,558.7],[845.7,571.3],[853.7,591.7],[922.7,664,1]
].forEach(([x, y, home]) =>
  add("pins", "use", { href: "#pin", class: home ? "pin-center" : "pin", x: x - 10, y: y - 27.5, width: 20, height: 28 }));
```
